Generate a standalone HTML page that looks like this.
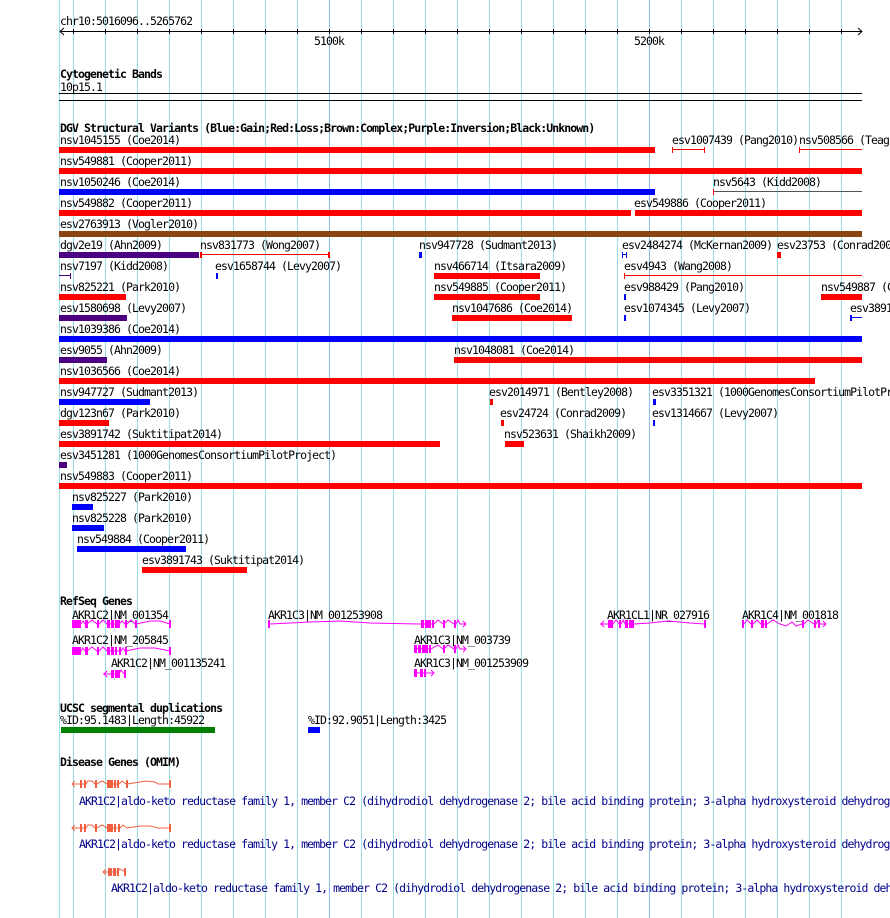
<!DOCTYPE html>
<html><head><meta charset="utf-8"><style>
html,body{margin:0;padding:0;background:#fff;width:890px;height:918px;overflow:hidden}
svg{display:block}
text{font-family:"DejaVu Sans Mono","Liberation Mono",monospace;font-size:11.5px;letter-spacing:-0.92px;fill:#000}
.b{font-weight:bold}
.o{fill:#00008b}
</style></head><body>
<svg width="890" height="918" viewBox="0 0 890 918" xmlns="http://www.w3.org/2000/svg">
<g fill="#96e0ea">
<rect x="59" y="0" width="1" height="918"/>
<rect x="73" y="0" width="1" height="918"/><rect x="105" y="0" width="1" height="918"/><rect x="137" y="0" width="1" height="918"/><rect x="169" y="0" width="1" height="918"/><rect x="201" y="0" width="1" height="918"/><rect x="233" y="0" width="1" height="918"/><rect x="265" y="0" width="1" height="918"/><rect x="297" y="0" width="1" height="918"/><rect x="361" y="0" width="1" height="918"/><rect x="393" y="0" width="1" height="918"/><rect x="425" y="0" width="1" height="918"/><rect x="457" y="0" width="1" height="918"/><rect x="489" y="0" width="1" height="918"/><rect x="521" y="0" width="1" height="918"/><rect x="553" y="0" width="1" height="918"/><rect x="585" y="0" width="1" height="918"/><rect x="617" y="0" width="1" height="918"/><rect x="681" y="0" width="1" height="918"/><rect x="713" y="0" width="1" height="918"/><rect x="745" y="0" width="1" height="918"/><rect x="777" y="0" width="1" height="918"/><rect x="809" y="0" width="1" height="918"/><rect x="841" y="0" width="1" height="918"/>
</g>
<g fill="#88c0ec"><rect x="329" y="0" width="1" height="918"/><rect x="649" y="0" width="1" height="918"/></g>

<text x="60" y="25">chr10:5016096..5265762</text>
<g stroke="#000" fill="none">
<line x1="60" y1="31.5" x2="862" y2="31.5"/>
<polyline points="64,28 60,31.5 64,35"/><polyline points="858,28 862,31.5 858,35"/>
<path d="M73.5 29v5M105.5 29v5M137.5 29v5M169.5 29v5M201.5 29v5M233.5 29v5M265.5 29v5M297.5 29v5M329.5 29v5M361.5 29v5M393.5 29v5M425.5 29v5M457.5 29v5M489.5 29v5M521.5 29v5M553.5 29v5M585.5 29v5M617.5 29v5M649.5 29v5M681.5 29v5M713.5 29v5M745.5 29v5M777.5 29v5M809.5 29v5M841.5 29v5"/>
</g>
<text x="314" y="45">5100k</text><text x="634" y="45">5200k</text>

<text class="b" x="60" y="78">Cytogenetic Bands</text>
<text x="60" y="91">10p15.1</text>
<rect x="59" y="93" width="803" height="1" fill="#000"/>
<rect x="59" y="100" width="803" height="1" fill="#000"/>

<text class="b" x="60" y="132">DGV Structural Variants (Blue:Gain;Red:Loss;Brown:Complex;Purple:Inversion;Black:Unknown)</text>
<g>
<text x="60" y="144">nsv1045155 (Coe2014)</text><rect x="59" y="147" width="596" height="6" fill="#f00"/>
<text x="672" y="144">esv1007439 (Pang2010)</text><rect x="672" y="149" width="33" height="1" fill="#f00"/><rect x="672" y="147" width="1" height="6" fill="#f00"/><rect x="704" y="147" width="1" height="6" fill="#f00"/>
<text x="799" y="144">nsv508566 (Teague</text><rect x="799" y="149" width="63" height="1" fill="#f00"/><rect x="799" y="147" width="1" height="6" fill="#f00"/>

<text x="60" y="165">nsv549881 (Cooper2011)</text><rect x="59" y="168" width="803" height="6" fill="#f00"/>

<text x="60" y="186">nsv1050246 (Coe2014)</text><rect x="59" y="189" width="596" height="6" fill="#00f"/>
<text x="713" y="186">nsv5643 (Kidd2008)</text><rect x="713" y="191" width="149" height="1" fill="#555"/><rect x="713" y="189" width="1" height="6" fill="#f00"/>

<text x="60" y="207">nsv549882 (Cooper2011)</text><rect x="59" y="210" width="572" height="6" fill="#f00"/>
<text x="634" y="207">esv549886 (Cooper2011)</text><rect x="635" y="210" width="227" height="6" fill="#f00"/>

<text x="60" y="228">esv2763913 (Vogler2010)</text><rect x="59" y="231" width="803" height="6" fill="#8b4513"/>

<text x="60" y="249">dgv2e19 (Ahn2009)</text><rect x="59" y="252" width="140" height="6" fill="#4b0082"/>
<text x="200" y="249">nsv831773 (Wong2007)</text><rect x="200" y="254" width="129" height="1" fill="#f00"/><rect x="200" y="252" width="2" height="6" fill="#f00"/><rect x="328" y="252" width="2" height="6" fill="#f00"/>
<text x="419" y="249">nsv947728 (Sudmant2013)</text><rect x="419" y="252" width="3" height="6" fill="#00f"/>
<text x="622" y="249">esv2484274 (McKernan2009)</text><path d="M622 252h1v6h-1zM626 252h1v6h-1zM622 254h5v1h-5z" fill="#00f"/>
<text x="777" y="249">esv23753 (Conrad2009)</text><rect x="777" y="252" width="4" height="6" fill="#f00"/>

<text x="60" y="270">nsv7197 (Kidd2008)</text><rect x="59" y="275" width="11" height="1" fill="#4b0082"/><rect x="70" y="273" width="1" height="6" fill="#4b0082"/>
<text x="215" y="270">esv1658744 (Levy2007)</text><rect x="216" y="273" width="2" height="6" fill="#00f"/>
<text x="434" y="270">nsv466714 (Itsara2009)</text><rect x="434" y="273" width="106" height="6" fill="#f00"/>
<text x="624" y="270">esv4943 (Wang2008)</text><rect x="624" y="275" width="238" height="1" fill="#f00"/><rect x="624" y="273" width="1" height="6" fill="#f00"/>

<text x="60" y="291">nsv825221 (Park2010)</text><rect x="59" y="294" width="67" height="6" fill="#f00"/>
<text x="434" y="291">nsv549885 (Cooper2011)</text><rect x="434" y="294" width="106" height="6" fill="#f00"/>
<text x="624" y="291">esv988429 (Pang2010)</text><rect x="624" y="294" width="2" height="6" fill="#00f"/>
<text x="821" y="291">nsv549887 (Cooper2011)</text><rect x="821" y="294" width="41" height="6" fill="#f00"/>

<text x="60" y="312">esv1580698 (Levy2007)</text><rect x="59" y="315" width="68" height="6" fill="#4b0082"/>
<text x="452" y="312">nsv1047686 (Coe2014)</text><rect x="452" y="315" width="120" height="6" fill="#f00"/>
<text x="624" y="312">esv1074345 (Levy2007)</text><rect x="624" y="315" width="2" height="6" fill="#00f"/>
<text x="850" y="312">esv3891741</text><rect x="850" y="317" width="12" height="1" fill="#00f"/><rect x="850" y="315" width="2" height="6" fill="#00f"/>

<text x="60" y="333">nsv1039386 (Coe2014)</text><rect x="59" y="336" width="803" height="6" fill="#00f"/>

<text x="60" y="354">esv9055 (Ahn2009)</text><rect x="59" y="357" width="48" height="6" fill="#4b0082"/>
<text x="454" y="354">nsv1048081 (Coe2014)</text><rect x="454" y="357" width="408" height="6" fill="#f00"/>

<text x="60" y="375">nsv1036566 (Coe2014)</text><rect x="59" y="378" width="756" height="6" fill="#f00"/>

<text x="60" y="396">nsv947727 (Sudmant2013)</text><rect x="59" y="399" width="91" height="6" fill="#00f"/>
<text x="489" y="396">esv2014971 (Bentley2008)</text><rect x="490" y="399" width="3" height="6" fill="#f00"/>
<text x="652" y="396">esv3351321 (1000GenomesConsortiumPilotProject)</text><rect x="653" y="399" width="3" height="6" fill="#00f"/>

<text x="60" y="417">dgv123n67 (Park2010)</text><rect x="59" y="420" width="50" height="6" fill="#f00"/>
<text x="500" y="417">esv24724 (Conrad2009)</text><rect x="501" y="420" width="3" height="6" fill="#f00"/>
<text x="652" y="417">esv1314667 (Levy2007)</text><rect x="653" y="420" width="2" height="6" fill="#00f"/>

<text x="60" y="438">esv3891742 (Suktitipat2014)</text><rect x="59" y="441" width="381" height="6" fill="#f00"/>
<text x="504" y="438">nsv523631 (Shaikh2009)</text><rect x="505" y="441" width="19" height="6" fill="#f00"/>

<text x="60" y="459">esv3451281 (1000GenomesConsortiumPilotProject)</text><rect x="59" y="462" width="8" height="6" fill="#4b0082"/>

<text x="60" y="480">nsv549883 (Cooper2011)</text><rect x="59" y="483" width="803" height="6" fill="#f00"/>

<text x="72" y="501">nsv825227 (Park2010)</text><rect x="72" y="504" width="21" height="6" fill="#00f"/>
<text x="72" y="522">nsv825228 (Park2010)</text><rect x="72" y="525" width="32" height="6" fill="#00f"/>
<text x="77" y="543">nsv549884 (Cooper2011)</text><rect x="77" y="546" width="109" height="6" fill="#00f"/>
<text x="142" y="564">esv3891743 (Suktitipat2014)</text><rect x="142" y="567" width="105" height="6" fill="#f00"/>
</g>

<text class="b" x="60" y="605">RefSeq Genes</text>
<g>
<text x="72" y="619">AKR1C2|NM_001354</text>
<text x="72" y="644">AKR1C2|NM_205845</text>
<text x="111" y="667">AKR1C2|NM_001135241</text>
<text x="268" y="619">AKR1C3|NM_001253908</text>
<text x="414" y="644">AKR1C3|NM_003739</text>
<text x="414" y="667">AKR1C3|NM_001253909</text>
<text x="607" y="619">AKR1CL1|NR_027916</text>
<text x="742" y="619">AKR1C4|NM_001818</text>
</g>
<g fill="#f0f">
<rect x="72" y="620" width="9" height="8"/>
<path d="M85 620h3v8h-3zM97 620h2v8h-2zM107 620h3v8h-3zM111 620h3v8h-3zM115 620h3v8h-3zM118 620h2v8h-2zM125 620h2v8h-2zM135 620h2v8h-2zM169 620h2v8h-2z"/>
<polyline fill="none" stroke="#f0f" points="81,624 83,621 85,624 87,624 92,620 97,624 99,624 103,620 107,624 119,624 122,621 125,624 127,624 131,620 135,624 136,624 150,621 160,621 170,624"/>
<rect x="72" y="647" width="9" height="8"/>
<path d="M85 647h3v8h-3zM97 647h2v8h-2zM107 647h3v8h-3zM111 647h3v8h-3zM115 647h2v8h-2zM119 647h2v8h-2zM125 647h2v8h-2zM169 647h2v8h-2z"/>
<polyline fill="none" stroke="#f0f" points="81,651 83,648 85,651 87,651 92,647 97,651 99,651 103,647 107,651 121,651 123,648 125,651 126,651 140,648 155,648 170,651"/>
<path d="M111 670h3v8h-3zM115 670h3v8h-3zM118 670h2v8h-2zM124 670h2v8h-2z"/>
<polyline fill="none" stroke="#f0f" points="103,674 119,674 121,670 124,674"/>
<polyline fill="none" stroke="#f0f" points="107,671 104,674 107,677"/>
<rect x="268" y="620" width="2" height="8"/>
<path d="M421 620h3v8h-3zM425 620h3v8h-3zM428 620h3v8h-3zM432 620h2v8h-2zM443 620h2v8h-2zM454 620h2v8h-2z"/>
<polyline fill="none" stroke="#f0f" points="270,624 310,622 340,621 370,623 420,624 434,624 438,620 443,624 444,624 448,620 454,624 456,624 458,620 460,624 466,624"/>
<polyline fill="none" stroke="#f0f" points="463,621 466,624 463,627"/>
<path d="M414 645h3v8h-3zM418 645h3v8h-3zM422 645h3v8h-3zM425 645h3v8h-3zM429 645h2v8h-2zM443 645h2v8h-2zM454 645h2v8h-2z"/>
<polyline fill="none" stroke="#f0f" points="414,646 418,649 431,649 438,645 443,649 444,649 448,645 454,649 456,649 458,645 460,649 466,649"/>
<polyline fill="none" stroke="#f0f" points="463,646 466,649 463,652"/>
<path d="M414 669h3v8h-3zM420 669h3v8h-3zM424 669h2v8h-2z"/>
<polyline fill="none" stroke="#f0f" points="414,670 418,673 434,673"/>
<polyline fill="none" stroke="#f0f" points="431,670 434,673 431,676"/>
<path d="M608 620h5v8h-5zM619 620h2v8h-2zM625 620h3v8h-3zM629 620h3v8h-3zM632 620h2v8h-2zM704 620h2v8h-2z"/>
<polyline fill="none" stroke="#f0f" points="600,624 613,624 616,620 619,624 621,624 623,620 625,624 634,624 650,623 668,621 690,623 705,624"/>
<polyline fill="none" stroke="#f0f" points="604,621 601,624 604,627"/>
<path d="M742 620h2v8h-2zM751 620h2v8h-2zM761 620h3v8h-3zM765 620h2v8h-2zM802 620h2v8h-2zM814 620h2v8h-2zM818 620h2v8h-2z"/>
<polyline fill="none" stroke="#f0f" points="744,624 747,620 751,624 753,624 757,620 761,624 767,624 773,620 780,624 786,626 792,622 796,626 802,624 804,624 808,620 814,624 816,624 818,620 820,624 826,624"/>
<polyline fill="none" stroke="#f0f" points="823,621 826,624 823,627"/>
</g>

<text class="b" x="60" y="712">UCSC segmental duplications</text>
<text x="60" y="724">%ID:95.1483|Length:45922</text>
<rect x="61" y="727" width="154" height="6" fill="#008000"/>
<text x="308" y="724">%ID:92.9051|Length:3425</text>
<rect x="308" y="727" width="12" height="6" fill="#00f"/>

<text class="b" x="60" y="766">Disease Genes (OMIM)</text>
<g fill="#f06040">
<path d="M80 780h2v8h-2zM84 780h2v8h-2zM95 780h2v8h-2zM107 780h3v8h-3zM110 780h3v8h-3zM114 780h2v8h-2zM117 780h2v8h-2zM126 780h2v8h-2zM169 780h2v8h-2z"/>
<polyline fill="none" stroke="#f06040" points="72,784 80,784 86,784 88,781 92,781 95,784 97,784 102,781 107,784 119,784 122,781 126,784 127,784 140,782 146,781 155,782 158,784 170,784"/>
<polyline fill="none" stroke="#f06040" points="75,781 72,784 75,787"/>
<path d="M80 824h2v8h-2zM84 824h2v8h-2zM95 824h2v8h-2zM107 824h3v8h-3zM110 824h3v8h-3zM114 824h2v8h-2zM118 824h2v8h-2zM169 824h2v8h-2z"/>
<polyline fill="none" stroke="#f06040" points="72,828 80,828 86,828 88,825 92,825 95,828 97,828 102,825 107,828 120,828 123,825 127,828 140,826 150,826 158,828 170,828"/>
<polyline fill="none" stroke="#f06040" points="75,825 72,828 75,831"/>
<path d="M108 868h4v8h-4zM113 868h3v8h-3zM117 868h2v8h-2zM124 868h2v8h-2z"/>
<polyline fill="none" stroke="#f06040" points="103,872 117,872 120,869 125,872"/>
<polyline fill="none" stroke="#f06040" points="106,869 103,872 106,875"/>
</g>
<text class="o" x="79" y="805">AKR1C2|aldo-keto reductase family 1, member C2 (dihydrodiol dehydrogenase 2; bile acid binding protein; 3-alpha hydroxysteroid dehydrogenase, type III)</text>
<text class="o" x="79" y="848">AKR1C2|aldo-keto reductase family 1, member C2 (dihydrodiol dehydrogenase 2; bile acid binding protein; 3-alpha hydroxysteroid dehydrogenase, type III)</text>
<text class="o" x="111" y="892">AKR1C2|aldo-keto reductase family 1, member C2 (dihydrodiol dehydrogenase 2; bile acid binding protein; 3-alpha hydroxysteroid dehydrogenase, type III)</text>
</svg>
</body></html>
